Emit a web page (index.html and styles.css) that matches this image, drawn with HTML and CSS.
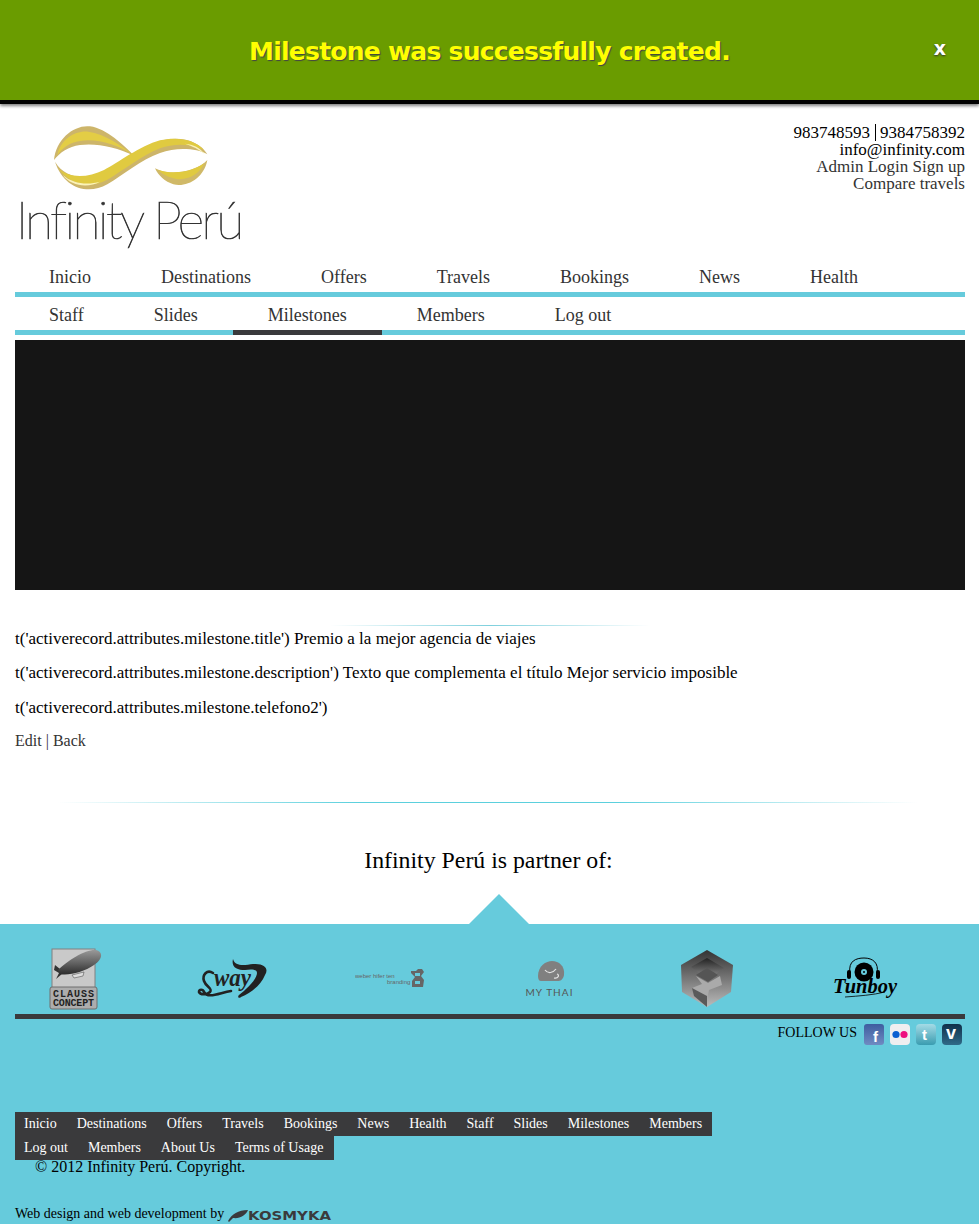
FILE: index.html
```html
<!DOCTYPE html>
<html lang="en">

<head>
  <meta charset="UTF-8">
  <title>Infinity Perú</title>
  <link rel="stylesheet" href="styles.css">
</head>

<body>
  <div class="alert">
    <p class="alert-text">Milestone was successfully created.</p>
    <a class="alert-close">x</a>
  </div>

  <div class="page">
    <header class="header">
      <svg class="logo" viewBox="45 27 705 390" width="235" height="130">
        <path fill="#cdb56a" d="M162 135 C168 70 225 28 270 34 C320 41 370 90 402 122 C350 96 290 84 240 90 C205 95 180 112 162 135 Z" />
        <path fill="#e3cd45" d="M172 120 C182 72 225 46 265 50 C315 56 365 93 400 120 C350 88 290 70 240 78 C210 82 188 98 172 120 Z" />
        <path fill="#cdb56a" d="M165 140 C195 192 262 196 312 172 C352 152 420 98 480 78 C540 60 600 78 622 118 C590 100 530 96 480 114 C420 136 372 178 322 208 C262 242 190 218 165 140 Z" />
        <path fill="#e0ca40" d="M175 160 C205 190 262 190 312 165 C352 145 420 92 480 76 C530 64 585 73 612 105 C570 86 525 84 480 100 C420 124 372 166 322 194 C265 224 205 206 175 160 Z" />
        <path fill="#fbf3b8" d="M188 180 C220 208 265 210 300 200 C265 220 213 214 188 180 Z" />
        <path fill="#fbf3b8" d="M555 86 C580 88 600 98 615 118 C596 102 578 94 555 86 Z" />
        <path fill="#d0b968" d="M465 160 C510 185 590 170 622 135 C612 190 560 218 520 208 C495 200 475 182 465 160 Z" />
        <path fill="#e0ca40" d="M475 165 C520 180 580 170 612 145 C600 180 555 200 520 190 C500 185 485 175 475 165 Z" />
        <text class="logo-text" x="47" y="372" textLength="686" lengthAdjust="spacing">Infinity Perú</text>
      </svg>
      <div class="contact">
        <div class="contact-main">983748593<span class="pipe"></span>9384758392</div>
        <div class="contact-main">info@infinity.com</div>
        <div><a>Admin Login</a> <a>Sign up</a></div>
        <div><a>Compare travels</a></div>
      </div>
    </header>

    <ul class="menu">
      <li>Inicio</li>
      <li>Destinations</li>
      <li>Offers</li>
      <li>Travels</li>
      <li>Bookings</li>
      <li>News</li>
      <li>Health</li>
    </ul>
    <ul class="menu">
      <li>Staff</li>
      <li>Slides</li>
      <li class="active">Milestones</li>
      <li>Members</li>
      <li>Log out</li>
    </ul>

    <div class="slider"></div>

    <hr class="line-small">
    <p class="field">t('activerecord.attributes.milestone.title') Premio a la mejor agencia de viajes</p>
    <p class="field">t('activerecord.attributes.milestone.description') Texto que complementa el título Mejor servicio imposible</p>
    <p class="field">t('activerecord.attributes.milestone.telefono2')</p>
    <p class="actions"><a>Edit</a> | <a>Back</a></p>

    <hr class="line-big">
    <h2 class="partner-title">Infinity Perú is partner of:</h2>
  </div>

  <footer class="footer">
    <div class="arrow"></div>
    <div class="partners">
      <svg viewBox="0 0 54 62" width="54" height="62">
        <defs>
          <linearGradient id="zep" x1="0" y1="0" x2="0" y2="1">
            <stop offset="0" stop-color="#999" />
            <stop offset="0.5" stop-color="#666" />
            <stop offset="1" stop-color="#2c2c2c" />
          </linearGradient>
        </defs>
        <rect x="4" y="1" width="43" height="39" fill="#c9c9c9" stroke="#808080" />
        <path fill="#333" d="M7 17 L12 21 L20 18 L14 26 L8 31 L11 25 L6 22 Z" />
        <path fill="url(#zep)" d="M10 22 C20 12 38 1 48 2 C56 4 54 12 46 17 C36 24 20 28 12 26 Z" />
        <path fill="#ddd" stroke="#555" stroke-width="0.6" d="M24 27 L36 24 L35 28 L26 30 Z" />
        <rect x="2" y="39" width="47" height="22" rx="2" fill="#adadad" stroke="#6e6e6e" />
        <text class="clauss" x="25.5" y="49" text-anchor="middle" textLength="41">CLAUSS</text>
        <text class="clauss" x="25.5" y="58" text-anchor="middle" textLength="41">CONCEPT</text>
      </svg>
      <svg viewBox="0 0 76 48" width="76" height="48">
        <path fill="none" stroke="#222" stroke-width="2.6" stroke-linecap="round" d="M18 18 C12 14 7 20 9 26 C11 32 18 33 15 37 C12 40 5 40 4 37 C4 34 8 34 9 37 C13 44 24 38 36 36" />
        <text class="sway" x="19" y="31" textLength="37" lengthAdjust="spacingAndGlyphs">way</text>
        <path fill="#222" d="M38 4 C40 12 50 10 58 9 C70 8 74 14 70 20 C66 30 56 38 46 42 C44 44 42 42 44 40 C52 34 62 24 62 18 C62 14 56 14 50 15 C42 15 36 12 38 4 Z" />
      </svg>
      <svg viewBox="0 0 72 22" width="72" height="22">
        <text class="weber" x="0" y="10">weber hifer ten</text>
        <text class="weber" x="32" y="16">branding</text>
        <path fill="#666" d="M56 3 h5 l2 -2 h4 l2 3 l-3 4 l3 4 l-1 7 h-11 v-6 l3 -4 l-4 -4 Z M60 5 v3 h5 v-3 Z M60 13 v3 h5 v-3 Z" fill-rule="evenodd" />
      </svg>
      <svg viewBox="0 0 50 38" width="50" height="38">
        <path fill="#808080" d="M14 16 C14 6 22 1 28 1 C35 1 41 6 40 15 C39 20 36 21 34 21 L20 21 L17 21 C15 21 14 19 14 16 Z" />
        <path fill="none" stroke="#e4e4e4" stroke-width="1.2" d="M21 10 C24 14 29 13 32 9 M30 18 C34 19 36 15 33 14" />
        <text class="thai" x="25" y="36" text-anchor="middle" textLength="47">MY THAI</text>
      </svg>
      <svg viewBox="0 0 54 58" width="54" height="58">
        <defs>
          <linearGradient id="cubetop" x1="0" y1="0" x2="0" y2="1">
            <stop offset="0" stop-color="#222" />
            <stop offset="1" stop-color="#777" />
          </linearGradient>
          <linearGradient id="cubeside" x1="0" y1="0" x2="0" y2="1">
            <stop offset="0" stop-color="#333" />
            <stop offset="1" stop-color="#bbb" />
          </linearGradient>
        </defs>
        <path fill="url(#cubeside)" d="M27 0 L53 15 L51 42 L27 57 L2 42 L1 15 Z" />
        <path fill="url(#cubetop)" d="M27 8 L44 18 L36 24 L27 18 L19 23 L11 17 Z" />
        <path fill="#555" d="M27 18 L38 25 L28 32 L16 25 Z" />
        <path fill="#aaa" d="M16 26 L28 33 L40 26 L42 35 L29 40 L27 50 L12 38 L22 34 Z" />
        <path fill="#5a5a5a" d="M12 38 L27 46 L27 57 L14 46 Z" />
      </svg>
      <svg viewBox="0 0 68 48" width="68" height="48">
        <path fill="none" stroke="#000" stroke-width="1" d="M19 18 C17 6 25 3 33 3 C42 3 48 8 46 18" />
        <rect x="16" y="15" width="4" height="9" rx="2" fill="#000" />
        <rect x="45" y="15" width="4" height="9" rx="2" fill="#000" />
        <circle cx="33" cy="17" r="9.5" fill="#000" />
        <circle cx="33" cy="17" r="3" fill="#66cbdc" />
        <circle cx="33" cy="17" r="1" fill="#000" />
        <text class="tunboy" x="2" y="38" textLength="64" lengthAdjust="spacingAndGlyphs">Tunboy</text>
        <path fill="none" stroke="#000" stroke-width="0.8" d="M14 42 C28 41 42 40 54 37" />
      </svg>
    </div>
    <div class="footer-bar"></div>
    <div class="follow">
      <span class="follow-text">FOLLOW US</span>
      <svg class="social" viewBox="0 0 20 21" width="20" height="21">
        <defs>
          <linearGradient id="fb" x1="0" y1="0" x2="0" y2="1">
            <stop offset="0" stop-color="#3e5d9f" />
            <stop offset="1" stop-color="#6f8bc2" />
          </linearGradient>
        </defs>
        <rect width="20" height="21" rx="3" fill="url(#fb)" />
        <text class="social-f" x="9" y="17.5">f</text>
      </svg>
      <svg class="social" viewBox="0 0 20 21" width="20" height="21">
        <rect width="20" height="21" rx="4" fill="#f0eef0" />
        <circle cx="6" cy="10.5" r="3.6" fill="#0c5fd1" />
        <circle cx="14" cy="10.5" r="3.6" fill="#ee0f7f" />
      </svg>
      <svg class="social" viewBox="0 0 20 21" width="20" height="21">
        <defs>
          <linearGradient id="tw" x1="0" y1="0" x2="0" y2="1">
            <stop offset="0" stop-color="#a4dbe6" />
            <stop offset="1" stop-color="#3a9cb0" />
          </linearGradient>
        </defs>
        <rect width="20" height="21" rx="4" fill="url(#tw)" />
        <text class="social-t" x="6" y="16">t</text>
      </svg>
      <svg class="social" viewBox="0 0 20 21" width="20" height="21">
        <defs>
          <linearGradient id="vm" x1="0" y1="0" x2="0" y2="1">
            <stop offset="0" stop-color="#10304a" />
            <stop offset="1" stop-color="#2f6a88" />
          </linearGradient>
        </defs>
        <rect width="20" height="21" rx="4" fill="url(#vm)" />
        <text class="social-v" x="4" y="15">v</text>
      </svg>
    </div>
    <ul class="footer-menu">
      <li>Inicio</li>
      <li>Destinations</li>
      <li>Offers</li>
      <li>Travels</li>
      <li>Bookings</li>
      <li>News</li>
      <li>Health</li>
      <li>Staff</li>
      <li>Slides</li>
      <li>Milestones</li>
      <li>Members</li>
      <li>Log out</li>
      <li>Members</li>
      <li>About Us</li>
      <li>Terms of Usage</li>
    </ul>
    <p class="copyright">© 2012 Infinity Perú. Copyright.</p>
    <p class="credits">
      <span>Web design and web development by</span>
      <svg class="kosmyka" viewBox="0 0 104 14" width="104" height="14">
        <path fill="#3a3a3c" d="M0 13 C4 6 10 2 20 2 C18 7 12 11 5 10 L1 14 Z" />
        <text class="kosmyka-text" x="20" y="12" textLength="83" lengthAdjust="spacingAndGlyphs">KOSMYKA</text>
      </svg>
    </p>
  </footer>
</body>

</html>
```

FILE: styles.css
```css
html {
  overflow: hidden;
}

body {
  margin: 0;
  height: 1224px;
  overflow: hidden;
  font-family: 'Liberation Serif', 'Times New Roman', serif;
  font-size: 16px;
  color: #000;
  background: #fff;
}

a {
  color: #333;
}

ul {
  list-style: none;
  margin: 0;
  padding: 0;
}

/* flash */
.alert {
  display: flex;
  align-items: center;
  justify-content: center;
  position: relative;
  height: 100px;
  background: #6a9c00;
  border-bottom: 4px solid #000;
  box-shadow: 0 2px 3px rgba(0, 0, 0, 0.5);
}

.alert-text {
  margin: 2px 0 0;
  font-family: 'DejaVu Sans', sans-serif;
  font-weight: bold;
  font-size: 25px;
  letter-spacing: -0.75px;
  color: #ff0;
  text-shadow: 1px 1px 1px #444;
}

.alert-close {
  position: absolute;
  right: 33px;
  top: 37px;
  font-family: 'DejaVu Sans', sans-serif;
  font-weight: bold;
  font-size: 19px;
  color: #fff;
  text-shadow: 0 1px 2px #333;
}

/* header */
.page {
  padding: 0 14px 0 15px;
}

.header {
  display: flex;
  justify-content: space-between;
  height: 155px;
}

.logo {
  margin-top: 20px;
  display: block;
}

.logo-text {
  font-family: Lato, sans-serif;
  font-weight: 100;
  font-size: 155px;
  font-variant-ligatures: none;
  fill: #333;
  stroke: #333;
  stroke-width: 2;
}

.contact {
  padding-top: 20px;
  text-align: right;
  line-height: 17px;
  font-size: 17px;
  color: #333;
}

.contact-main {
  color: #000;
}

.pipe {
  display: inline-block;
  height: 17px;
  margin: 0 4px 0 5px;
  border-left: 1px solid #000;
  vertical-align: top;
}

.menu {
  display: flex;
  border-bottom: 5px solid #66cbdc;
  height: 33px;
}

.menu li {
  height: 33px;
  padding: 8px 35px 0;
  box-sizing: border-box;
  font-size: 18px;
  line-height: 20px;
  color: #333;
}

.menu li:first-child {
  padding-left: 34px;
}

.menu li.active {
  height: 38px;
  border-bottom: 5px solid #3a3a3c;
}

.slider {
  height: 250px;
  margin-top: 5px;
  background: #151515;
}

/* show */
.line-small {
  width: 320px;
  height: 1px;
  margin: 35px auto 3px;
  border: 0;
  background: linear-gradient(to right, #fff, #7fd0dd 50%, #fff);
}

.field {
  margin: 0 0 15px;
  font-size: 17px;
  line-height: 19.4px;
}

.actions {
  margin: 0;
  color: #333;
  line-height: 18px;
}

.line-big {
  width: 860px;
  height: 1px;
  margin: 52px 0 0 43px;
  border: 0;
  background: linear-gradient(to right, #fff, #5bd0dd 35%, #5bd0dd 65%, #fff);
}

.partner-title {
  margin: 43px 0 0;
  height: 78px;
  padding-right: 3px;
  font-weight: normal;
  font-size: 23.8px;
  line-height: 28px;
  text-align: center;
}

/* footer */
.footer {
  position: relative;
  height: 300px;
  padding: 0 14px 0 15px;
  background: #66cbdc;
}

.arrow {
  position: absolute;
  left: 469px;
  top: -30px;
  width: 0;
  height: 0;
  border-left: 30px solid transparent;
  border-right: 30px solid transparent;
  border-bottom: 30px solid #66cbdc;
}

.partners {
  display: grid;
  grid-template-columns: repeat(6, 120px);
  column-gap: 38px;
  justify-items: center;
  align-items: center;
  height: 90px;
  padding-top: 20px;
  box-sizing: border-box;
}

.clauss {
  font-family: 'Liberation Mono', monospace;
  font-weight: bold;
  font-size: 10px;
  fill: #222;
}

.sway {
  font-family: 'Liberation Serif', serif;
  font-style: italic;
  font-weight: bold;
  font-size: 26px;
  fill: #222;
}

.weber {
  font-family: 'Liberation Sans', sans-serif;
  font-size: 6px;
  fill: #666;
}

.thai {
  font-family: Lato, sans-serif;
  font-size: 10px;
  fill: #555;
}

.tunboy {
  font-family: 'Liberation Serif', serif;
  font-style: italic;
  font-weight: bold;
  font-size: 20px;
  fill: #000;
}

.footer-bar {
  height: 5px;
  background: #3a3a3c;
}

.follow {
  display: flex;
  justify-content: flex-end;
  gap: 6px;
  height: 93px;
  padding: 5px 3px 0 0;
  box-sizing: border-box;
}

.follow-text {
  margin: 1px 1px 0 0;
  font-size: 14px;
  line-height: 16px;
}

.social {
  display: block;
}

.social-f {
  font-family: 'Liberation Sans', sans-serif;
  font-weight: bold;
  font-size: 15px;
  fill: #fff;
}

.social-t {
  font-family: 'Liberation Sans', sans-serif;
  font-weight: bold;
  font-size: 15px;
  fill: #fff;
}

.social-v {
  font-family: 'Liberation Sans', sans-serif;
  font-weight: bold;
  font-size: 18px;
  fill: #fff;
}

.footer-menu {
  display: flex;
  flex-wrap: wrap;
  width: 720px;
}

.footer-menu li {
  height: 24px;
  padding: 0 10px;
  font-size: 14px;
  line-height: 23px;
  color: #fff;
  background: #3a3a3c;
}

.footer-menu li:first-child,
.footer-menu li:nth-child(12) {
  padding-left: 9px;
}

.footer-menu li:last-child {
  padding-right: 11px;
}

.copyright {
  margin: -2px 0 0 20px;
}

.credits {
  display: flex;
  align-items: center;
  gap: 4px;
  margin: 30px 0 0;
  font-size: 14px;
}

.kosmyka {
  display: block;
  margin-top: 2px;
}

.kosmyka-text {
  font-family: 'DejaVu Sans', sans-serif;
  font-weight: bold;
  font-size: 13px;
  fill: #3a3a3c;
}
```
